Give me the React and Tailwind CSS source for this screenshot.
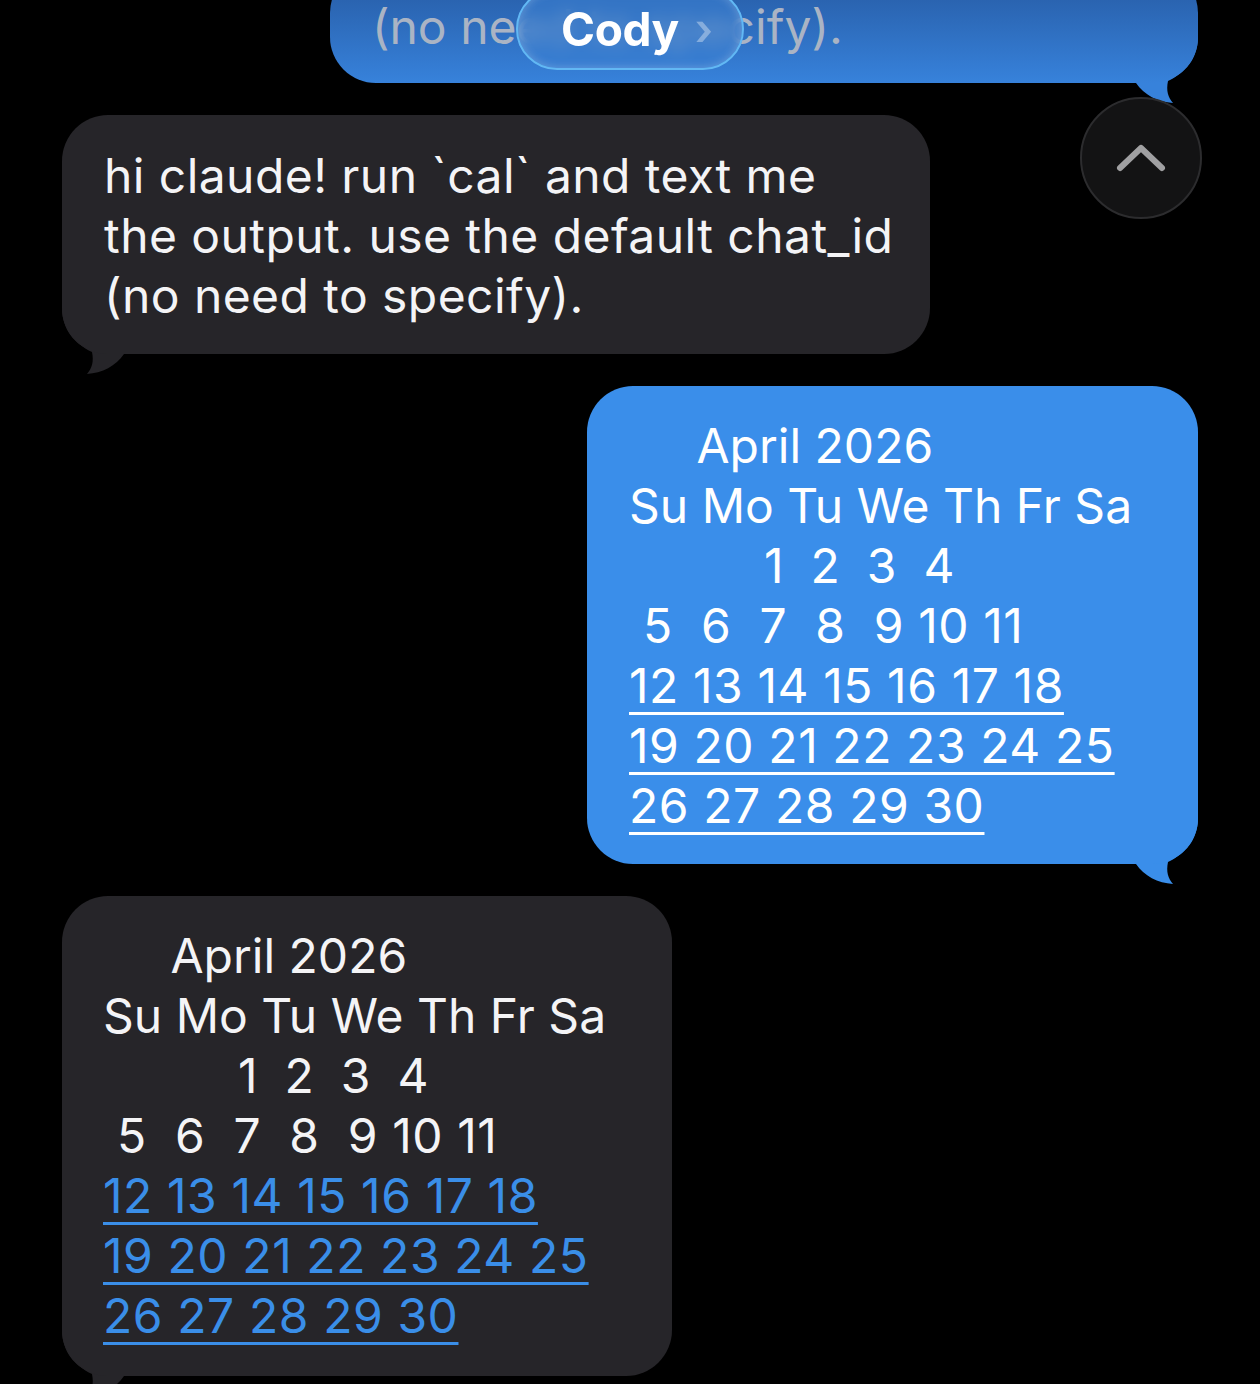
import React from "react";

const FONT = { fontFamily: "Inter, 'Noto Sans', sans-serif" };

function Tail({ color, side, top }) {
  const id = "g" + side + (top || "").replace("#", "");
  return (
    <svg
      width="70"
      height="72"
      viewBox="0 0 70 72"
      className={
        "absolute bottom-[-22px] " +
        (side === "right" ? "right-0" : "left-0 -scale-x-100")
      }
    >
      {top ? (
        <defs>
          <linearGradient id={id} x1="0" y1="0" x2="0" y2="1">
            <stop offset="0" stopColor={top} />
            <stop offset="0.7" stopColor={color} />
            <stop offset="1" stopColor={color} />
          </linearGradient>
        </defs>
      ) : null}
      <path
        d="M0 0 L70 0 L70 4 C70 26 57 40 40 48 C38 58 40 64 45 70 C30 69 16 62 8 50 L0 50 Z"
        fill={top ? `url(#${id})` : color}
      />
    </svg>
  );
}

function CalLines({ num }) {
  const u =
    num === "blue"
      ? "underline decoration-[2.5px] underline-offset-[9px] text-[#3a8ee8] decoration-[#3a8ee8] tracking-[0.012em]"
      : "underline decoration-[2.5px] underline-offset-[9px] decoration-white tracking-[0.012em]";
  return (
    <div className="whitespace-pre leading-[60px] text-[48px]">
      <div>{"     April 2026"}</div>
      <div>{"Su Mo Tu We Th Fr Sa"}</div>
      <div>{"          1  2  3  4"}</div>
      <div className="tracking-[0.012em]">{" 5  6  7  8  9 10 11"}</div>
      <div>
        <span className={u}>{"12 13 14 15 16 17 18"}</span>
      </div>
      <div>
        <span className={u}>{"19 20 21 22 23 24 25"}</span>
      </div>
      <div>
        <span className={u}>{"26 27 28 29 30"}</span>
      </div>
    </div>
  );
}

export default function App() {
  return (
    <div
      className="relative w-[1260px] h-[1384px] overflow-hidden bg-black"
      style={FONT}
    >
      <div className="flex flex-col gap-[32px] px-[62px]">
        {/* top partially visible bubble */}
        <div className="self-end relative mt-[-33px] w-[868px]">
          <div className="relative z-10 rounded-[46px] bg-gradient-to-b from-[#2558a0] to-[#3782db] pl-[42px] pt-[30px] pb-[26px] text-[48px] leading-[60px] text-[#aab4c4] whitespace-nowrap">
            (no need to specify).
          </div>
          <Tail color="#3782db" top="#3275c8" side="right" />
        </div>

        {/* gray bubble 1 */}
        <div className="self-start relative w-[868px]">
          <div className="relative z-10 rounded-[46px] bg-[#262529] pl-[42px] pt-[31px] pb-[28px] text-[48px] leading-[60px] text-[#f4f4f6] whitespace-nowrap tracking-[0.009em]">
            hi claude! run `cal` and text me
            <br />
            the output. use the default chat_id
            <br />
            (no need to specify).
          </div>
          <Tail color="#262529" side="left" />
        </div>

        {/* blue bubble 2 */}
        <div className="self-end relative w-[611px]">
          <div className="relative z-10 rounded-[46px] bg-[#3a8eea] pl-[42px] pt-[30px] pb-[28px] text-white">
            <CalLines num="white" />
          </div>
          <Tail color="#3a8eea" side="right" />
        </div>

        {/* gray bubble 3 */}
        <div className="self-start relative w-[610px]">
          <div className="relative z-10 rounded-[46px] bg-[#262529] pl-[41px] pt-[30px] pb-[30px] text-[#f4f4f6]">
            <CalLines num="blue" />
          </div>
          <Tail color="#262529" side="left" />
        </div>
      </div>

      {/* Cody pill */}
      <div className="absolute left-[516px] top-[-12px] z-20 flex h-[82px] w-[228px] items-center justify-center gap-[16px] rounded-full border-2 border-[#62b8f4] bg-[#3a7fd0]/60 shadow-[inset_0_0_10px_rgba(255,255,255,0.25)] backdrop-blur-sm">
        <span className="text-[46px] font-bold leading-none text-white tracking-[-0.01em] pl-[14px]">
          Cody
        </span>
        <span className="text-[44px] font-semibold leading-none text-white/35">
          ›
        </span>
      </div>

      {/* up button */}
      <div className="absolute left-[1080px] top-[97px] z-20 flex h-[122px] w-[122px] items-center justify-center rounded-full border-2 border-[#2c2c2e] bg-[#131314]">
        <svg width="50" height="30" viewBox="0 0 50 30">
          <path
            d="M4 25 L25 5 L46 25"
            fill="none"
            stroke="#a0a0a2"
            strokeWidth="6"
            strokeLinecap="round"
            strokeLinejoin="round"
          />
        </svg>
      </div>
    </div>
  );
}
